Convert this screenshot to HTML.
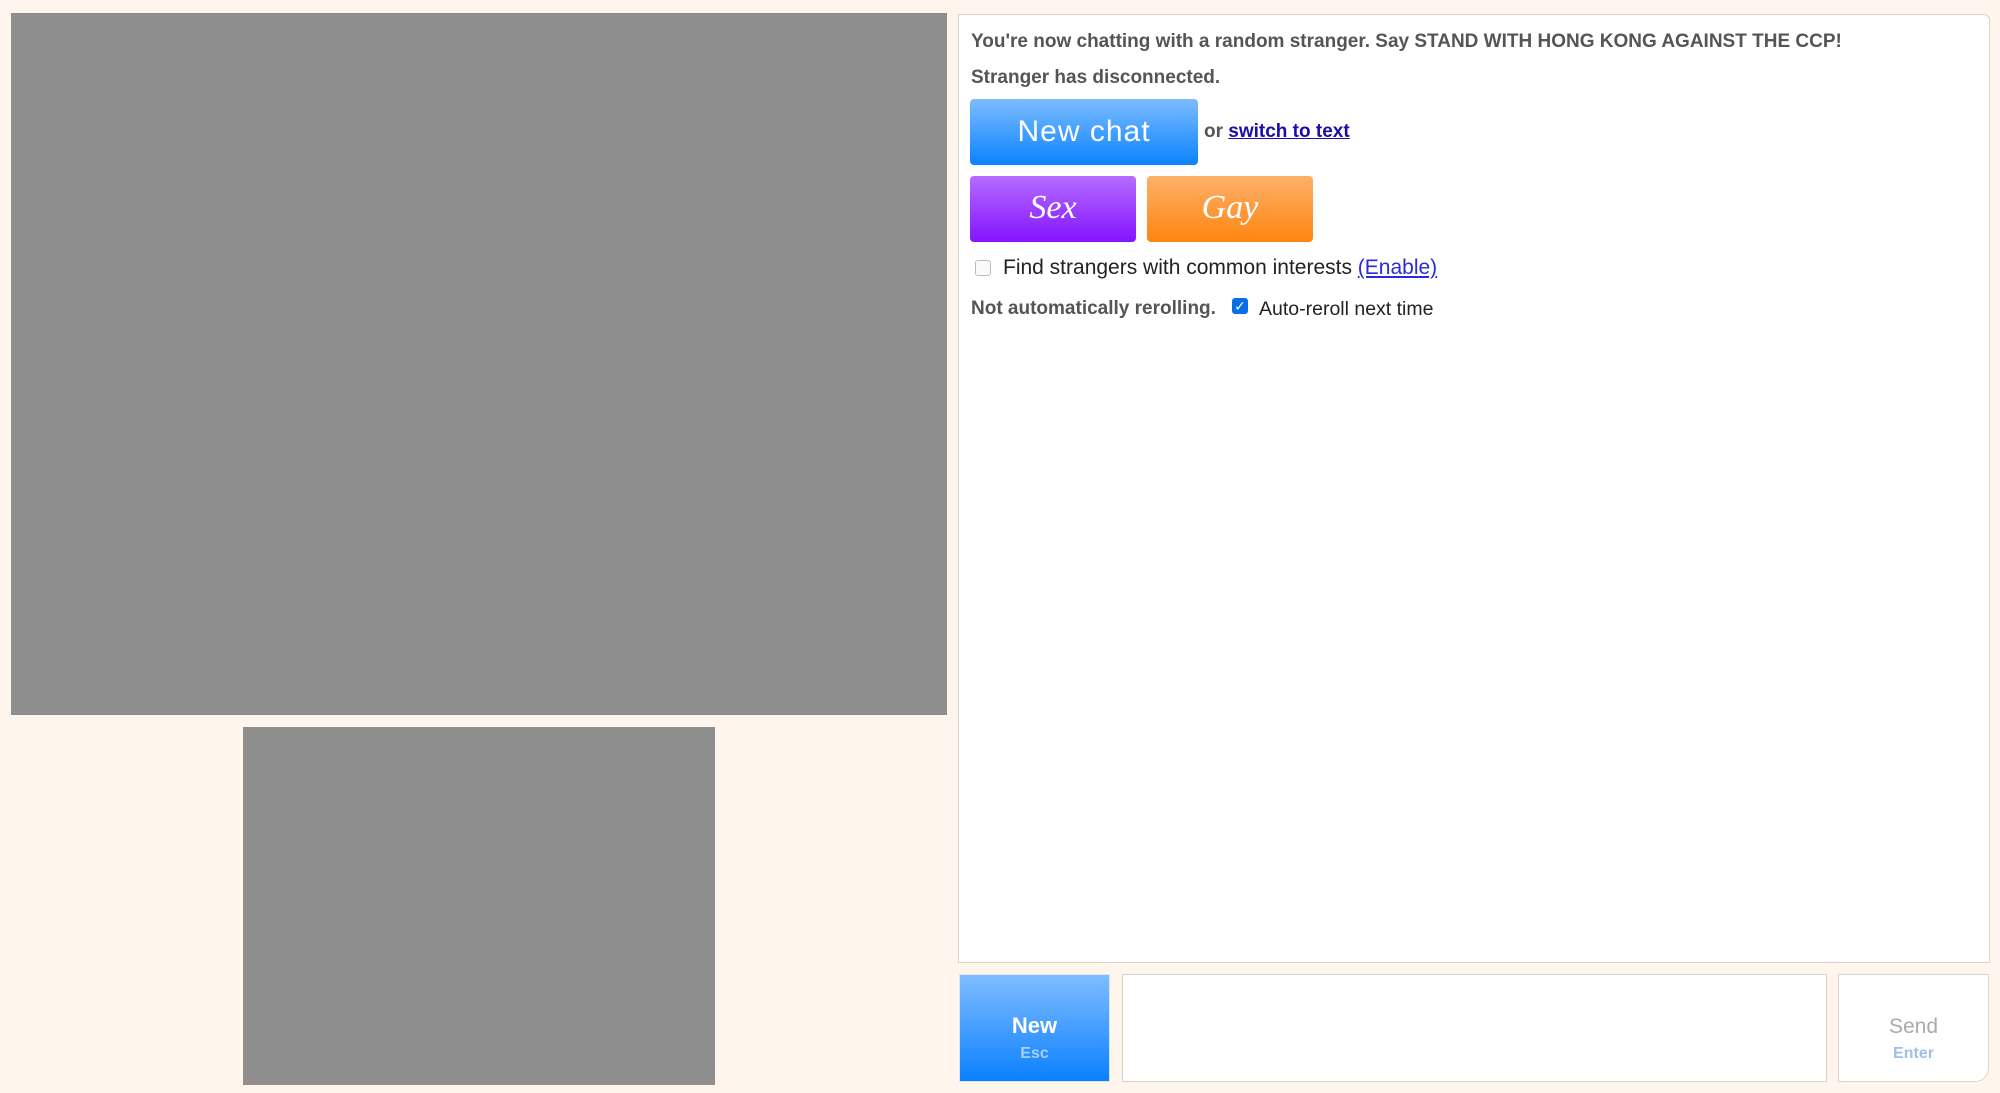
<!DOCTYPE html>
<html><head><meta charset="utf-8">
<style>
html,body{margin:0;padding:0;}
body{width:2000px;height:1093px;background:#fef6ed;position:relative;overflow:hidden;font-family:"Liberation Sans","DejaVu Sans",sans-serif;}
.abs{position:absolute;}
.vid{background:#8e8e8e;}
#log{left:958px;top:14px;width:1030px;height:947px;background:#fff;border:1px solid #d9d2cc;border-radius:0 6px 0 0;}
.t{position:absolute;left:12px;color:#555;font-weight:bold;font-size:19px;white-space:nowrap;}
.btn{position:absolute;border-radius:4px;color:#fff;text-align:center;}
a{color:#1a0dab;}
.cb{position:absolute;width:14px;height:14px;border:1px solid #bbb;border-radius:3px;background:#fafafa;}
</style></head><body>
<div class="abs vid" style="left:11px;top:13px;width:936px;height:702px;"></div>
<div class="abs vid" style="left:243px;top:727px;width:472px;height:356px;border-bottom:2px solid #9a8d7f"></div>

<div id="log" class="abs">
  <div class="t" style="top:16px;">You're now chatting with a random stranger. Say STAND WITH HONG KONG AGAINST THE CCP!</div>
  <div class="t" style="top:52px;">Stranger has disconnected.</div>
  <div class="btn" style="left:11px;top:84px;width:228px;height:66px;background:linear-gradient(#7cbcff,#0b83ff);font-size:30px;line-height:66px;letter-spacing:1px;">New chat</div>
  <div class="t" style="left:245px;top:106px;">or <a href="#" style="color:#1a0dab">switch to text</a></div>
  <div class="btn" style="left:11px;top:161px;width:166px;height:66px;background:linear-gradient(#b56cff,#8414ff);font-family:'Liberation Serif',serif;font-style:italic;font-size:34px;line-height:64px;">Sex</div>
  <div class="btn" style="left:188px;top:161px;width:166px;height:66px;background:linear-gradient(#fdb06a,#ff8510);font-family:'Liberation Serif',serif;font-style:italic;font-size:34px;line-height:64px;">Gay</div>
  <div class="cb" style="left:16px;top:245px;"></div>
  <div class="abs" style="left:44px;top:241px;font-size:21px;color:#222;white-space:nowrap;">Find strangers with common interests <a href="#" style="color:#2a2adb">(Enable)</a></div>
  <div class="t" style="top:283px;">Not automatically rerolling.</div>
  <div class="abs" style="left:273px;top:283px;width:16px;height:16px;background:#0b6ee8;border-radius:3px;color:#fff;font-size:14px;line-height:16px;text-align:center;font-weight:bold;">✓</div>
  <div class="abs" style="left:300px;top:283px;font-size:19.5px;color:#222;white-space:nowrap;">Auto-reroll next time</div>
</div>

<div class="abs" style="left:959px;top:974px;width:151px;height:108px;background:linear-gradient(#80bcff,#0b80ff);border:1px solid #d6e6f7;box-sizing:border-box;text-align:center;color:#fff;">
  <div style="font-weight:bold;font-size:22px;margin-top:38px;">New</div>
  <div style="font-weight:bold;font-size:16px;color:#a9d1ff;margin-top:6px;">Esc</div>
</div>
<div class="abs" style="left:1122px;top:974px;width:705px;height:108px;background:#fff;border:1px solid #d6cfc8;box-sizing:border-box;"></div>
<div class="abs" style="left:1838px;top:974px;width:151px;height:108px;background:#fff;border:1px solid #ddd5ce;box-sizing:border-box;border-radius:0 0 14px 0;text-align:center;">
  <div style="font-size:21px;color:#aaa;margin-top:40px;">Send</div>
  <div style="font-weight:bold;font-size:16px;color:#9fc0e6;margin-top:6px;">Enter</div>
</div>
</body></html>
